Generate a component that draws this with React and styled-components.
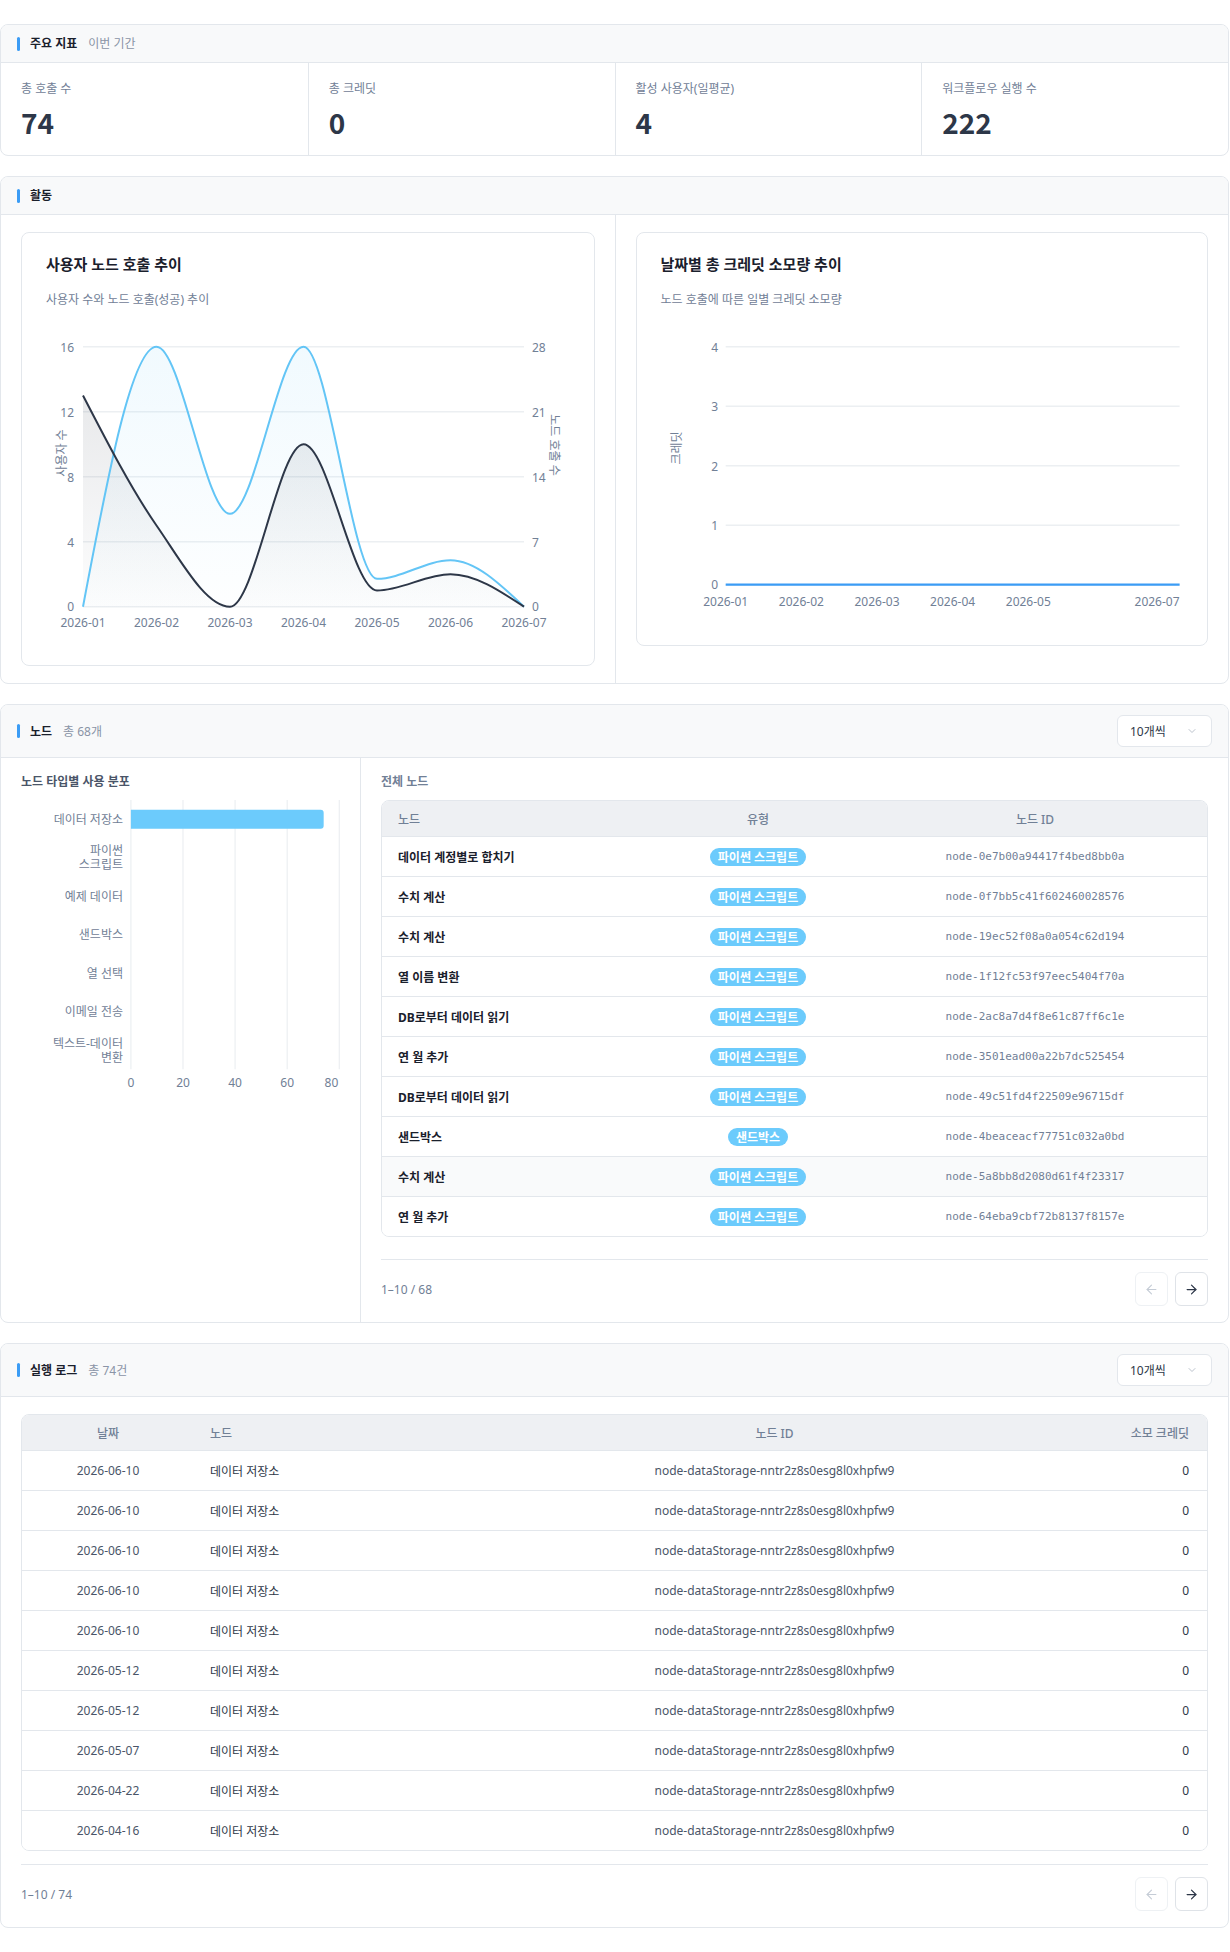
import React from "react";
import styled, { createGlobalStyle } from "styled-components";
import { ArrowLeft, ArrowRight, ChevronDown } from "lucide-react";

const C = {
  border: "#e3e7ec",
  headBg: "#f8f9fa",
  accent: "#3b9cf5",
  ink: "#1a202c",
  navy: "#2d3748",
  text: "#4a5568",
  muted: "#718096",
  sky: "#63c5f6",
  bar: "#6ccbfc",
  grid: "#eceff2",
};

const GlobalStyle = createGlobalStyle`
  html, body { margin: 0; padding: 0; background: #ffffff; }
  body {
    font-family: "Noto Sans", "Noto Sans CJK KR", sans-serif;
    color: ${C.navy};
    -webkit-font-smoothing: antialiased;
  }
  *, *::before, *::after { box-sizing: border-box; }
`;

const Page = styled.main`
  width: 1230px;
  display: flex;
  flex-direction: column;
  gap: 20px;
  padding: 24px 1px 24px 0;
`;

const Card = styled.section`
  border: 1px solid ${C.border};
  border-radius: 8px;
  background: #fff;
  overflow: hidden;
`;

const CardHeader = styled.header`
  display: flex;
  align-items: center;
  justify-content: space-between;
  min-height: 38px;
  padding: 10px 16px;
  background: ${C.headBg};
  border-bottom: 1px solid ${C.border};
`;

const HeaderTitle = styled.div`
  display: flex;
  align-items: center;
  line-height: 17px;
`;

const Accent = styled.span`
  width: 3px;
  height: 14px;
  border-radius: 2px;
  background: ${C.accent};
  margin-right: 10px;
`;

const Title = styled.h2`
  margin: 0;
  font-size: 12px;
  font-weight: 700;
  color: ${C.ink};
`;

const TitleSub = styled.span`
  margin-left: 11px;
  font-size: 12px;
  color: #8a94a6;
`;

const Select = styled.div`
  width: 95px;
  height: 32px;
  display: flex;
  align-items: center;
  justify-content: space-between;
  padding: 0 13px 0 12px;
  border: 1px solid ${C.border};
  border-radius: 6px;
  background: #fff;
  font-size: 12px;
  color: ${C.navy};
  svg { color: #a9b2bf; }
`;

const MetricsGrid = styled.div`
  display: grid;
  grid-template-columns: repeat(4, 1fr);
`;

const MetricCell = styled.div`
  display: flex;
  flex-direction: column;
  gap: 8px;
  padding: 18px 20px 16px;
  & + & { border-left: 1px solid ${C.border}; }
`;

const MetricLabel = styled.div`
  font-size: 12px;
  line-height: 16px;
  color: ${C.muted};
`;

const MetricValue = styled.div`
  font-family: "Noto Sans CJK KR", "Noto Sans", sans-serif;
  font-size: 28px;
  line-height: 34px;
  font-weight: 700;
  color: ${C.navy};
`;

const Columns = styled.div`
  display: grid;
  grid-template-columns: ${(p) => p.$cols};
`;

const Column = styled.div`
  min-width: 0;
  padding: ${(p) => p.$pad};
  & + & { border-left: 1px solid ${C.border}; }
`;

const ChartCard = styled.div`
  border: 1px solid ${C.border};
  border-radius: 8px;
  padding: 21px 24px 23px;
`;

const ChartTitle = styled.h3`
  margin: 0;
  font-size: 15px;
  line-height: 20px;
  font-weight: 700;
  color: ${C.ink};
`;

const ChartSub = styled.p`
  margin: 18px 0 0;
  font-size: 12px;
  line-height: 16px;
  color: ${C.muted};
`;

const ChartSvg = styled.svg`
  display: block;
  margin-top: ${(p) => p.$mt ?? 8}px;
  overflow: visible;
  font-family: "Noto Sans", "Noto Sans CJK KR", sans-serif;
`;

const SectionLabel = styled.div`
  font-size: 12px;
  line-height: 16px;
  font-weight: 600;
  color: ${(p) => (p.$dark ? C.text : C.muted)};
`;

const Table = styled.div`
  margin-top: ${(p) => p.$mt || 0}px;
  border: 1px solid ${C.border};
  border-radius: 8px;
  overflow: hidden;
`;

const Row = styled.div`
  display: grid;
  grid-template-columns: ${(p) => p.$cols};
  align-items: center;
  height: ${(p) => (p.$head ? 36 : 40)}px;
  border-bottom: 1px solid ${C.border};
  background: ${(p) => (p.$head ? "#eef0f3" : p.$hover ? "#f9fafb" : "#fff")};
  &:last-child { border-bottom: none; height: 39px; }
`;

const Cell = styled.div`
  min-width: 0;
  padding: 0 ${(p) => p.$pr ?? 16}px 0 ${(p) => p.$pl ?? 16}px;
  text-align: ${(p) => p.$align || "left"};
  font-size: 12px;
  white-space: nowrap;
  color: ${(p) => (p.$head ? C.muted : p.$color || C.text)};
  font-weight: ${(p) => (p.$head ? 500 : p.$bold ? 700 : 400)};
`;

const MonoCell = styled(Cell)`
  font-family: "DejaVu Sans Mono", monospace;
  font-size: 11px;
  color: ${C.muted};
`;

const Badge = styled.span`
  display: inline-flex;
  align-items: center;
  height: 18px;
  padding: 0 8px;
  border-radius: 9px;
  background: ${C.bar};
  color: #fff;
  font-size: 12px;
  font-weight: 700;
`;

const Pager = styled.div`
  margin-top: ${(p) => p.$mt}px;
  padding-top: 12px;
  border-top: 1px solid ${C.border};
  display: flex;
  align-items: center;
  justify-content: space-between;
`;

const PageInfo = styled.span`
  font-size: 12px;
  color: ${C.muted};
`;

const PageButtons = styled.div`
  display: flex;
  gap: 7px;
`;

const PageButton = styled.button`
  width: 33px;
  height: 34px;
  padding: 0;
  display: flex;
  align-items: center;
  justify-content: center;
  border: 1px solid ${(p) => (p.disabled ? "#eef1f4" : "#dfe3e8")};
  border-radius: 6px;
  background: #fff;
  color: ${(p) => (p.disabled ? "#c5ccd6" : C.navy)};
`;

const BodyPad = styled.div`
  padding: 17px 20px 16px;
`;

/* ---------- chart helpers ---------- */

function monotonePath(pts) {
  const n = pts.length;
  const s = [];
  for (let i = 0; i < n - 1; i++)
    s.push((pts[i + 1][1] - pts[i][1]) / (pts[i + 1][0] - pts[i][0]));
  const sign = (x) => (x < 0 ? -1 : 1);
  const m = new Array(n).fill(0);
  for (let i = 1; i < n - 1; i++) {
    const h0 = pts[i][0] - pts[i - 1][0];
    const h1 = pts[i + 1][0] - pts[i][0];
    const s0 = s[i - 1];
    const s1 = s[i];
    const p = (s0 * h1 + s1 * h0) / (h0 + h1);
    m[i] =
      (sign(s0) + sign(s1)) *
        Math.min(Math.abs(s0), Math.abs(s1), 0.5 * Math.abs(p)) || 0;
  }
  m[0] = (3 * s[0] - m[1]) / 2;
  m[n - 1] = (3 * s[n - 2] - m[n - 2]) / 2;
  let d = `M${pts[0][0]},${pts[0][1]}`;
  for (let i = 0; i < n - 1; i++) {
    const [x0, y0] = pts[i];
    const [x1, y1] = pts[i + 1];
    const dx = (x1 - x0) / 3;
    d += `C${x0 + dx},${y0 + dx * m[i]},${x1 - dx},${y1 - dx * m[i + 1]},${x1},${y1}`;
  }
  return d;
}

const months = ["2026-01", "2026-02", "2026-03", "2026-04", "2026-05", "2026-06", "2026-07"];

function UserChart() {
  const x0 = 37;
  const x1 = 478;
  const top = 30.7;
  const bottom = 290.7;
  const h = bottom - top;
  const step = (x1 - x0) / 6;
  const xs = months.map((_, i) => x0 + i * step);
  const calls = [0, 28, 10, 28, 3, 5, 0];
  const users = [13, 5, 0, 10, 1, 2, 0];
  const yL = (v) => bottom - (v / 16) * h;
  const yR = (v) => bottom - (v / 28) * h;
  const callPts = calls.map((v, i) => [xs[i], yR(v)]);
  const userPts = users.map((v, i) => [xs[i], yL(v)]);
  const callLine = monotonePath(callPts);
  const userLine = monotonePath(userPts);
  const close = `L${x1},${bottom}L${x0},${bottom}Z`;
  const leftTicks = [0, 4, 8, 12, 16];
  const rightTicks = [0, 7, 14, 21, 28];
  const tickDy = (t) => (t === 0 ? 4 : 5.5);
  return (
    <ChartSvg width="100%" height="326">
      <defs>
        <linearGradient id="gCalls" x1="0" y1="0" x2="0" y2="1">
          <stop offset="0%" stopColor={C.sky} stopOpacity="0.09" />
          <stop offset="100%" stopColor={C.sky} stopOpacity="0.01" />
        </linearGradient>
        <linearGradient id="gUsers" x1="0" y1="0" x2="0" y2="1">
          <stop offset="0%" stopColor={C.navy} stopOpacity="0.11" />
          <stop offset="100%" stopColor={C.navy} stopOpacity="0.01" />
        </linearGradient>
      </defs>
      {leftTicks.map((t) => (
        <line key={t} x1={x0} x2={x1} y1={yL(t)} y2={yL(t)} stroke={C.grid} strokeWidth="1.5" />
      ))}
      {leftTicks.map((t) => (
        <text key={"l" + t} x={28} y={yL(t) + tickDy(t)} textAnchor="end" fontSize="12" fill={C.muted}>
          {t}
        </text>
      ))}
      {rightTicks.map((t) => (
        <text key={"r" + t} x={486} y={yR(t) + tickDy(t)} textAnchor="start" fontSize="12" fill={C.muted}>
          {t}
        </text>
      ))}
      {months.map((m, i) => (
        <text key={m} x={xs[i]} y={311} textAnchor="middle" fontSize="12" fill={C.muted}>
          {m}
        </text>
      ))}
      <text
        x={15}
        y={137}
        transform="rotate(-90 15 137)"
        textAnchor="middle"
        dominantBaseline="central"
        fontSize="12"
        fill={C.muted}
      >
        사용자 수
      </text>
      <text
        x={508}
        y={129}
        transform="rotate(90 508 129)"
        textAnchor="middle"
        dominantBaseline="central"
        fontSize="12"
        fill={C.muted}
      >
        노드 호출 수
      </text>
      <path d={callLine + close} fill="url(#gCalls)" />
      <path d={userLine + close} fill="url(#gUsers)" />
      <path d={callLine} fill="none" stroke={C.sky} strokeWidth="2" />
      <path d={userLine} fill="none" stroke={C.navy} strokeWidth="2" />
    </ChartSvg>
  );
}

function CreditChart() {
  const x0 = 64.7;
  const x1 = 518.6;
  const top = 30.7;
  const step = 59.5;
  const ticks = [4, 3, 2, 1, 0];
  const y = (v) => top + (4 - v) * step;
  const xstep = (x1 - x0) / 6;
  const labels = ["2026-01", "2026-02", "2026-03", "2026-04", "2026-05"];
  return (
    <ChartSvg width="100%" height="306">
      {ticks.map((t) => (
        <line key={t} x1={x0} x2={x1} y1={y(t)} y2={y(t)} stroke={C.grid} strokeWidth="1.5" />
      ))}
      {ticks.map((t) => (
        <text key={"t" + t} x={57} y={y(t) + (t === 0 ? 4 : 5)} textAnchor="end" fontSize="12" fill={C.muted}>
          {t}
        </text>
      ))}
      {labels.map((m, i) => (
        <text key={m} x={x0 + i * xstep} y={290} textAnchor="middle" fontSize="12" fill={C.muted}>
          {m}
        </text>
      ))}
      <text x={x1} y={290} textAnchor="end" fontSize="12" fill={C.muted}>
        2026-07
      </text>
      <text
        x={15}
        y={132}
        transform="rotate(-90 15 132)"
        textAnchor="middle"
        dominantBaseline="central"
        fontSize="12"
        fill={C.muted}
      >
        크레딧
      </text>
      <line x1={x0} x2={x1} y1={y(0)} y2={y(0)} stroke={C.accent} strokeWidth="2.2" />
    </ChartSvg>
  );
}

const nodeTypes = [
  { lines: ["데이터 저장소"], value: 74 },
  { lines: ["파이썬", "스크립트"], value: 0 },
  { lines: ["예제 데이터"], value: 0 },
  { lines: ["샌드박스"], value: 0 },
  { lines: ["열 선택"], value: 0 },
  { lines: ["이메일 전송"], value: 0 },
  { lines: ["텍스트-데이터", "변환"], value: 0 },
];

function TypeChart() {
  const gx0 = 109.9;
  const per20 = 52.1;
  const top = 2;
  const band = 38.47;
  const bottom = top + band * 7;
  const xv = (v) => gx0 + (v / 20) * per20;
  const ticks = [0, 20, 40, 60, 80];
  const tickLabelX = [xv(0), xv(20), xv(40), xv(60), 310.4];
  return (
    <ChartSvg width="100%" height="295" $mt={8}>
      {ticks.map((t) => (
        <line key={t} x1={xv(t)} x2={xv(t)} y1={top} y2={bottom} stroke={C.grid} strokeWidth="1.2" />
      ))}
      {ticks.map((t, i) => (
        <text key={"x" + t} x={tickLabelX[i]} y={289} textAnchor="middle" fontSize="12" fill={C.muted}>
          {t}
        </text>
      ))}
      {nodeTypes.map((n, i) => {
        const c = top + band * i + band / 2;
        return (
          <g key={i}>
            {n.lines.map((ln, j) => (
              <text
                key={j}
                x={102}
                y={c + 4.5 + (n.lines.length === 2 ? (j === 0 ? -7 : 7) : 0)}
                textAnchor="end"
                fontSize="12"
                fill={C.muted}
              >
                {ln}
              </text>
            ))}
            {n.value > 0 && (
              <path
                d={`M${gx0},${c - 9.6}H${xv(n.value) - 3}a3,3 0 0 1 3,3V${c + 6.6}a3,3 0 0 1 -3,3H${gx0}Z`}
                fill={C.bar}
              />
            )}
          </g>
        );
      })}
    </ChartSvg>
  );
}

const metrics = [
  { label: "총 호출 수", value: "74" },
  { label: "총 크레딧", value: "0" },
  { label: "활성 사용자(일평균)", value: "4" },
  { label: "워크플로우 실행 수", value: "222" },
];

const nodes = [
  ["데이터 계정별로 합치기", "파이썬 스크립트", "node-0e7b00a94417f4bed8bb0a"],
  ["수치 계산", "파이썬 스크립트", "node-0f7bb5c41f602460028576"],
  ["수치 계산", "파이썬 스크립트", "node-19ec52f08a0a054c62d194"],
  ["열 이름 변환", "파이썬 스크립트", "node-1f12fc53f97eec5404f70a"],
  ["DB로부터 데이터 읽기", "파이썬 스크립트", "node-2ac8a7d4f8e61c87ff6c1e"],
  ["연 월 추가", "파이썬 스크립트", "node-3501ead00a22b7dc525454"],
  ["DB로부터 데이터 읽기", "파이썬 스크립트", "node-49c51fd4f22509e96715df"],
  ["샌드박스", "샌드박스", "node-4beaceacf77751c032a0bd"],
  ["수치 계산", "파이썬 스크립트", "node-5a8bb8d2080d61f4f23317"],
  ["연 월 추가", "파이썬 스크립트", "node-64eba9cbf72b8137f8157e"],
];

const logDates = [
  "2026-06-10",
  "2026-06-10",
  "2026-06-10",
  "2026-06-10",
  "2026-06-10",
  "2026-05-12",
  "2026-05-12",
  "2026-05-07",
  "2026-04-22",
  "2026-04-16",
];

const NODE_COLS = "238px 276px 1fr";
const LOG_COLS = "172px 268px 1fr 120px";

function Pagination({ info, mt }) {
  return (
    <Pager $mt={mt}>
      <PageInfo>{info}</PageInfo>
      <PageButtons>
        <PageButton disabled aria-label="이전">
          <ArrowLeft size={15} strokeWidth={1.8} />
        </PageButton>
        <PageButton aria-label="다음">
          <ArrowRight size={15} strokeWidth={2} />
        </PageButton>
      </PageButtons>
    </Pager>
  );
}

function SectionHeader({ title, sub, select }) {
  return (
    <CardHeader>
      <HeaderTitle>
        <Accent />
        <Title>{title}</Title>
        {sub && <TitleSub>{sub}</TitleSub>}
      </HeaderTitle>
      {select && (
        <Select>
          <span>10개씩</span>
          <ChevronDown size={12} strokeWidth={1.6} />
        </Select>
      )}
    </CardHeader>
  );
}

export default function App() {
  return (
    <>
      <GlobalStyle />
      <Page>
        <Card>
          <SectionHeader title="주요 지표" sub="이번 기간" />
          <MetricsGrid>
            {metrics.map((m) => (
              <MetricCell key={m.label}>
                <MetricLabel>{m.label}</MetricLabel>
                <MetricValue>{m.value}</MetricValue>
              </MetricCell>
            ))}
          </MetricsGrid>
        </Card>

        <Card>
          <SectionHeader title="활동" />
          <Columns $cols="1fr 1fr">
            <Column $pad="17px 20px">
              <ChartCard>
                <ChartTitle>사용자 노드 호출 추이</ChartTitle>
                <ChartSub>사용자 수와 노드 호출(성공) 추이</ChartSub>
                <UserChart />
              </ChartCard>
            </Column>
            <Column $pad="17px 20px">
              <ChartCard>
                <ChartTitle>날짜별 총 크레딧 소모량 추이</ChartTitle>
                <ChartSub>노드 호출에 따른 일별 크레딧 소모량</ChartSub>
                <CreditChart />
              </ChartCard>
            </Column>
          </Columns>
        </Card>

        <Card>
          <SectionHeader title="노드" sub="총 68개" select />
          <Columns $cols="359px 1fr">
            <Column $pad="16px 20px">
              <SectionLabel $dark>노드 타입별 사용 분포</SectionLabel>
              <TypeChart />
            </Column>
            <Column $pad="16px 20px 16px">
              <SectionLabel>전체 노드</SectionLabel>
              <Table $mt={10}>
                <Row $head $cols={NODE_COLS}>
                  <Cell $head>노드</Cell>
                  <Cell $head $align="center">유형</Cell>
                  <Cell $head $align="center" $pr={49}>노드 ID</Cell>
                </Row>
                {nodes.map((n, i) => (
                  <Row key={n[2]} $cols={NODE_COLS} $hover={i === 8}>
                    <Cell $bold $color={C.ink}>{n[0]}</Cell>
                    <Cell $align="center">
                      <Badge>{n[1]}</Badge>
                    </Cell>
                    <MonoCell $align="center" $pr={49}>{n[2]}</MonoCell>
                  </Row>
                ))}
              </Table>
              <Pagination info="1–10 / 68" mt={22} />
            </Column>
          </Columns>
        </Card>

        <Card>
          <SectionHeader title="실행 로그" sub="총 74건" select />
          <BodyPad>
            <Table>
              <Row $head $cols={LOG_COLS}>
                <Cell $head $align="center">날짜</Cell>
                <Cell $head>노드</Cell>
                <Cell $head $align="center">노드 ID</Cell>
                <Cell $head $align="right" $pr={18}>소모 크레딧</Cell>
              </Row>
              {logDates.map((d, i) => (
                <Row key={i} $cols={LOG_COLS}>
                  <Cell $align="center" $color={C.text}>{d}</Cell>
                  <Cell $color={C.navy}>데이터 저장소</Cell>
                  <Cell $align="center" $color={C.text}>node-dataStorage-nntr2z8s0esg8l0xhpfw9</Cell>
                  <Cell $align="right" $pr={18} $color={C.navy}>0</Cell>
                </Row>
              ))}
            </Table>
            <Pagination info="1–10 / 74" mt={13} />
          </BodyPad>
        </Card>
      </Page>
    </>
  );
}
